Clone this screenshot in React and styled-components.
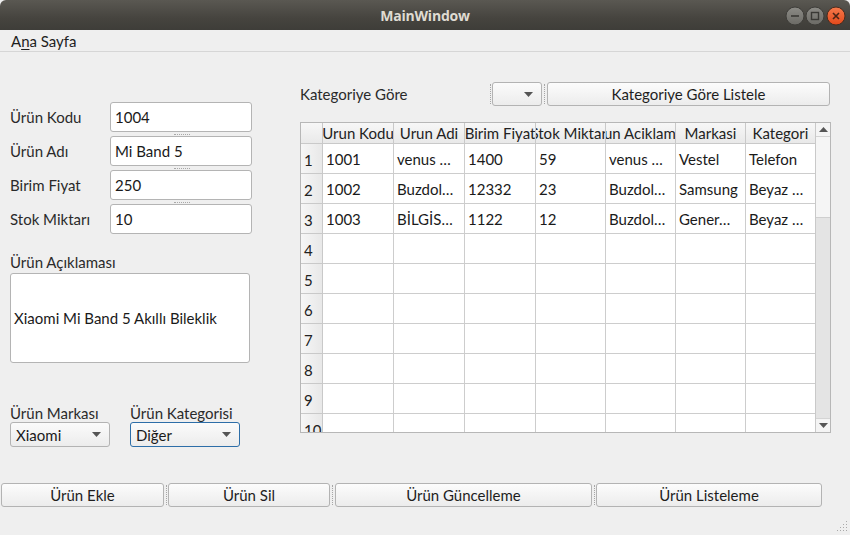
import styled, { createGlobalStyle } from "styled-components";

const GlobalStyle = createGlobalStyle`
  html, body { margin: 0; padding: 0; background: #efefef; }
  body {
    font-family: Lato, "Noto Sans", sans-serif;
    font-size: 15px;
    color: #2e2e2e;
  }
  * { box-sizing: border-box; }
`;

const columns = [
  { title: "Urun Kodu", w: 71 },
  { title: "Urun Adi", w: 71 },
  { title: "Birim Fiyat", w: 71 },
  { title: "Stok Miktari", w: 70 },
  { title: "Urun Aciklamasi", w: 70 },
  { title: "Markasi", w: 70 },
  { title: "Kategori", w: 70 },
];

const rows = [
  ["1001", "venus …", "1400", "59", "venus …", "Vestel", "Telefon"],
  ["1002", "Buzdol…", "12332", "23", "Buzdol…", "Samsung", "Beyaz …"],
  ["1003", "BİLGİS…", "1122", "12", "Buzdol…", "Gener…", "Beyaz …"],
  ["", "", "", "", "", "", ""],
  ["", "", "", "", "", "", ""],
  ["", "", "", "", "", "", ""],
  ["", "", "", "", "", "", ""],
  ["", "", "", "", "", "", ""],
  ["", "", "", "", "", "", ""],
  ["", "", "", "", "", "", ""],
];

const gridCols = `22px ${columns.map((c) => c.w + "px").join(" ")}`;

function Arrow() {
  return (
    <svg width="9" height="5" viewBox="0 0 9 5">
      <path d="M0 0 H9 L4.5 5 Z" fill="#555" />
    </svg>
  );
}

function WindowButtons() {
  return (
    <svg width="62" height="22" viewBox="0 0 62 22">
      <defs>
        <linearGradient id="gr" x1="0" y1="0" x2="0" y2="1">
          <stop offset="0" stopColor="#8c8b86" />
          <stop offset="1" stopColor="#6b6a65" />
        </linearGradient>
        <linearGradient id="or" x1="0" y1="0" x2="0" y2="1">
          <stop offset="0" stopColor="#f67a4c" />
          <stop offset="1" stopColor="#e2481a" />
        </linearGradient>
      </defs>
      <circle cx="10" cy="11" r="9" fill="url(#gr)" stroke="#3e3d39" strokeWidth="1" />
      <path d="M6 11 H14" stroke="#3a3935" strokeWidth="1.6" />
      <circle cx="30" cy="11" r="9" fill="url(#gr)" stroke="#3e3d39" strokeWidth="1" />
      <rect x="26.5" y="7.5" width="7" height="7" fill="none" stroke="#3a3935" strokeWidth="1.4" />
      <circle cx="51" cy="11" r="9" fill="url(#or)" stroke="#4a2c1e" strokeWidth="1" />
      <path d="M48 8 L54 14 M54 8 L48 14" stroke="#4a2416" strokeWidth="1.6" />
    </svg>
  );
}

function SizeGrip() {
  const dots = [
    [9, 1], [9, 4], [6, 4], [9, 7], [6, 7], [3, 7], [9, 10], [6, 10], [3, 10], [0, 10],
  ];
  return (
    <svg width="11" height="12" viewBox="0 0 11 12">
      {dots.map(([x, y], i) => (
        <rect key={i} x={x} y={y} width="1" height="1" fill="#a9a9a9" />
      ))}
    </svg>
  );
}

export default function App() {
  return (
    <Window>
      <GlobalStyle />
      <TitleBar>
        <span />
        <Title>MainWindow</Title>
        <TitleButtons>
          <WindowButtons />
        </TitleButtons>
      </TitleBar>
      <MenuBar>
        <MenuItem>
          A<u>n</u>a Sayfa
        </MenuItem>
      </MenuBar>

      <Body>
        <LeftPane>
          <FieldGrid>
            <Label>Ürün Kodu</Label>
            <Field $handle>1004</Field>
            <Label>Ürün Adı</Label>
            <Field $handle>Mi Band 5</Field>
            <Label>Birim Fiyat</Label>
            <Field $handle>250</Field>
            <Label>Stok Miktarı</Label>
            <Field>10</Field>
          </FieldGrid>

          <DescLabel>Ürün Açıklaması</DescLabel>
          <TextArea>Xiaomi Mi Band 5 Akıllı Bileklik</TextArea>

          <ComboGrid>
            <Label>Ürün Markası</Label>
            <Label>Ürün Kategorisi</Label>
            <Combo>
              Xiaomi
              <Arrow />
            </Combo>
            <Combo $focused>
              Diğer
              <Arrow />
            </Combo>
          </ComboGrid>
        </LeftPane>

        <RightPane>
          <FilterRow>
            <Label>Kategoriye Göre</Label>
            <Handle />
            <Combo>
              <span />
              <Arrow />
            </Combo>
            <Handle />
            <PushButton>Kategoriye Göre Listele</PushButton>
          </FilterRow>

          <TableFrame>
            <TableView>
              <HeaderRow>
                <CornerCell />
                {columns.map((c) => (
                  <HeadCell key={c.title}>{c.title}</HeadCell>
                ))}
              </HeaderRow>
              {rows.map((r, i) => (
                <DataRow key={i}>
                  <RowHead>{i + 1}</RowHead>
                  {r.map((v, j) => (
                    <Cell key={j}>{v}</Cell>
                  ))}
                </DataRow>
              ))}
            </TableView>
            <ScrollBar>
              <ScrollStep>
                <svg width="9" height="5" viewBox="0 0 9 5">
                  <path d="M0 5 H9 L4.5 0 Z" fill="#555" />
                </svg>
              </ScrollStep>
              <ScrollTrack>
                <ScrollThumb />
              </ScrollTrack>
              <ScrollStep>
                <Arrow />
              </ScrollStep>
            </ScrollBar>
          </TableFrame>
        </RightPane>
      </Body>

      <ButtonRow>
        <PushButton $w={163}>Ürün Ekle</PushButton>
        <SplitHandle $w={4} />
        <PushButton $w={162}>Ürün Sil</PushButton>
        <SplitHandle $w={5} />
        <PushButton $w={257}>Ürün Güncelleme</PushButton>
        <SplitHandle $w={4} />
        <PushButton $w={226}>Ürün Listeleme</PushButton>
      </ButtonRow>

      <GripRow>
        <SizeGrip />
      </GripRow>
    </Window>
  );
}

const Window = styled.div`
  width: 850px;
  height: 535px;
  display: flex;
  flex-direction: column;
  background: #efefef;
  overflow: hidden;
`;

const TitleBar = styled.div`
  height: 30px;
  flex: none;
  display: grid;
  grid-template-columns: 1fr auto 1fr;
  align-items: center;
  background: linear-gradient(to bottom, #5a5852, #46443f 60%, #3e3d39);
  border-radius: 6px 6px 0 0;
`;

const Title = styled.div`
  font-family: "Open Sans", Lato, sans-serif;
  font-weight: 700;
  font-size: 14px;
  color: #dfdbd2;
  letter-spacing: -0.2px;
`;

const TitleButtons = styled.div`
  display: flex;
  justify-content: flex-end;
  padding-right: 3px;
  padding-top: 1px;
`;

const MenuBar = styled.div`
  height: 22px;
  flex: none;
  display: flex;
  align-items: center;
  padding-left: 11px;
  border-bottom: 1px solid #d6d6d6;
  background: #efefef;
`;

const MenuItem = styled.span`
  color: #1e1e1e;
  u {
    text-decoration-thickness: 1px;
    text-underline-offset: 2px;
  }
`;

const Body = styled.div`
  height: 431px;
  flex: none;
  display: flex;
`;

const LeftPane = styled.div`
  width: 290px;
  padding: 50px 0 0 10px;
  display: flex;
  flex-direction: column;
`;

const Label = styled.div`
  color: #2a2a2a;
  white-space: nowrap;
`;

const FieldGrid = styled.div`
  display: grid;
  grid-template-columns: 100px 142px;
  grid-auto-rows: 30px;
  row-gap: 4px;
  align-items: center;
`;

const Field = styled.div`
  position: relative;
  height: 30px;
  display: flex;
  align-items: center;
  padding-left: 4px;
  background: #fff;
  border: 1px solid #b4b4b4;
  border-radius: 3px;
  color: #1a1a1a;

  &::after {
    content: "";
    display: ${(p) => (p.$handle ? "block" : "none")};
    position: absolute;
    left: 63px;
    bottom: -4px;
    width: 16px;
    border-top: 1px dotted #a8a8a8;
  }
`;

const DescLabel = styled(Label)`
  margin-top: 19px;
  height: 19px;
`;

const TextArea = styled.div`
  width: 240px;
  height: 90px;
  margin-top: 1px;
  display: flex;
  align-items: center;
  padding-left: 3px;
  background: #fff;
  border: 1px solid #b4b4b4;
  border-radius: 3px;
  color: #1a1a1a;
`;

const ComboGrid = styled.div`
  margin-top: 41px;
  display: grid;
  grid-template-columns: 100px 110px;
  column-gap: 20px;
`;

const Combo = styled.div`
  height: 25px;
  display: flex;
  align-items: center;
  justify-content: space-between;
  padding: 0 8px 0 5px;
  background: linear-gradient(to bottom, #fbfbfb, #ececec);
  border: 1px solid ${(p) => (p.$focused ? "#2d6ea8" : "#b3b3b3")};
  border-radius: 3px;
  color: #1a1a1a;
`;

const RightPane = styled.div`
  flex: 1;
  padding: 30px 0 0 10px;
  display: flex;
  flex-direction: column;
`;

const FilterRow = styled.div`
  display: grid;
  grid-template-columns: 188px 4px 50px 5px 283px;
  height: 24px;
  align-items: center;

  ${Combo} {
    height: 24px;
  }
`;

const Handle = styled.div`
  height: 20px;
  justify-self: center;
  border-left: 1px dotted #a6a6a6;
`;

const SplitHandle = styled.div`
  width: ${(p) => p.$w}px;
  flex: none;
  display: flex;
  justify-content: center;

  &::before {
    content: "";
    height: 20px;
    border-left: 1px dotted #a6a6a6;
  }
`;

const PushButton = styled.div`
  height: 24px;
  flex: none;
  width: ${(p) => (p.$w ? p.$w + "px" : "auto")};
  display: flex;
  align-items: center;
  justify-content: center;
  background: linear-gradient(to bottom, #fcfcfc, #ececec);
  border: 1px solid #b3b3b3;
  border-radius: 3px;
  color: #1e1e1e;
`;

const TableFrame = styled.div`
  margin-top: 16px;
  width: 531px;
  height: 311px;
  display: grid;
  grid-template-columns: 1fr 15px;
  border: 1px solid #b7b7b7;
  background: #fff;
  overflow: hidden;
`;

const TableView = styled.div`
  overflow: hidden;
  display: flex;
  flex-direction: column;
`;

const HeaderRow = styled.div`
  display: grid;
  grid-template-columns: ${gridCols};
  height: 21px;
  flex: none;
`;

const headBg = `
  background: linear-gradient(to bottom, #f7f7f7, #e9e9e9);
  border-right: 1px solid #c9c9c9;
  border-bottom: 1px solid #c9c9c9;
`;

const CornerCell = styled.div`
  ${headBg}
`;

const HeadCell = styled.div`
  ${headBg}
  display: flex;
  justify-content: center;
  align-items: center;
  overflow: hidden;
  white-space: nowrap;
  color: #222;
`;

const DataRow = styled.div`
  display: grid;
  grid-template-columns: ${gridCols};
  height: 30px;
  flex: none;
`;

const RowHead = styled.div`
  ${headBg}
  background: linear-gradient(to right, #f6f6f6, #e8e8e8);
  display: flex;
  align-items: center;
  padding: 3px 0 0 3px;
  color: #222;
  overflow: hidden;
`;

const Cell = styled.div`
  display: flex;
  align-items: center;
  padding-left: 3px;
  border-right: 1px solid #cdcdcd;
  border-bottom: 1px solid #cdcdcd;
  white-space: nowrap;
  overflow: hidden;
  color: #1a1a1a;
`;

const ScrollBar = styled.div`
  display: flex;
  flex-direction: column;
  border-left: 1px solid #c9c9c9;
  background: #e4e4e4;
`;

const ScrollStep = styled.div`
  height: 14px;
  flex: none;
  display: flex;
  align-items: center;
  justify-content: center;
  background: #f4f4f4;
  border-bottom: 1px solid #d4d4d4;

  &:last-child {
    border-bottom: none;
    border-top: 1px solid #d4d4d4;
  }
`;

const ScrollTrack = styled.div`
  flex: 1;
  display: flex;
  flex-direction: column;
`;

const ScrollThumb = styled.div`
  height: 81px;
  background: #f5f5f5;
  border-bottom: 1px solid #cfcfcf;
`;

const ButtonRow = styled.div`
  height: 24px;
  flex: none;
  display: flex;
  align-items: center;
  padding-left: 1px;
`;

const GripRow = styled.div`
  flex: 1;
  display: flex;
  justify-content: flex-end;
  align-items: flex-end;
  padding: 0 2px 3px 0;
`;
